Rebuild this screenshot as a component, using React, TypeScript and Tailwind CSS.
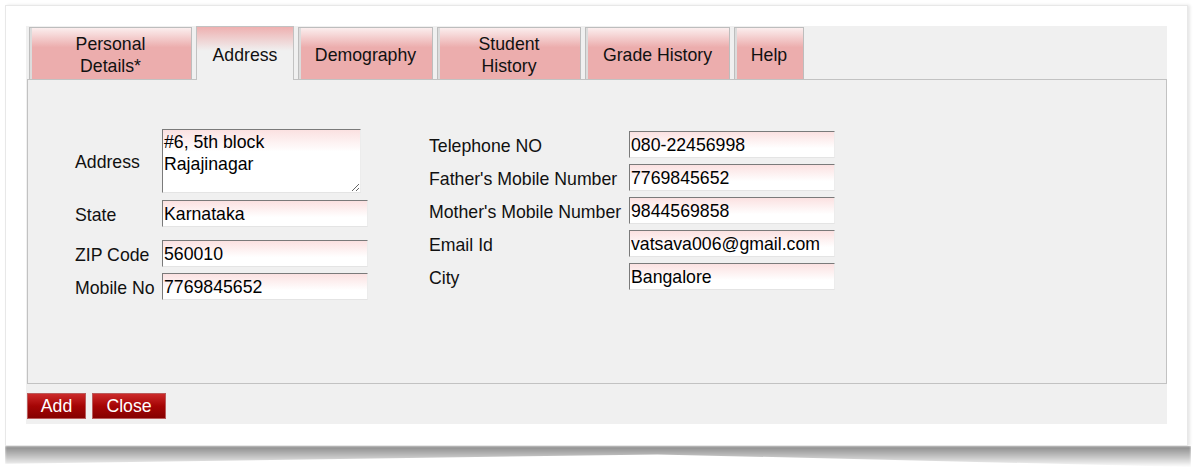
import React from "react";

const font = "font-['Liberation_Sans',Arial,sans-serif]";

const tabs = [
  { label: "Personal\nDetails*", w: "w-[163px]" },
  { label: "Address", w: "w-[98px]", active: true },
  { label: "Demography", w: "w-[135px]" },
  { label: "Student\nHistory", w: "w-[144px]" },
  { label: "Grade History", w: "w-[145px]" },
  { label: "Help", w: "w-[70px]" },
];

const inputCls =
  "h-[27px] w-[206px] border border-t-[#7a7a7a] border-l-[#7a7a7a] border-r-[#ececec] border-b-[#e4e4e4] bg-[linear-gradient(to_bottom,#fbe1e1,#ffffff_65%)] px-[1px] pt-[2px] text-[17.7px] leading-[23px] text-black outline-none";

function Field({ value }: { value: string }) {
  return <input type="text" defaultValue={value} className={inputCls} />;
}

const rightFields = [
  ["Telephone NO", "080-22456998"],
  ["Father's Mobile Number", "7769845652"],
  ["Mother's Mobile Number", "9844569858"],
  ["Email Id", "vatsava006@gmail.com"],
  ["City", "Bangalore"],
];

export default function App() {
  return (
    <div className={`w-[1201px] h-[474px] bg-white pt-[5px] pl-[5px] ${font}`}>
      <div className="w-[1183px]">
        {/* card */}
        <div className="bg-white border border-[#e8e8e8] shadow-[2px_0_3px_rgba(0,0,0,0.10)] px-[20px] pt-[20px] pb-[21px]">
          <div className="w-[1141px] h-[398px] bg-[#f0f0f0]">
            {/* tabs */}
            <div className="flex items-end gap-[4px] h-[53px] pl-[3px]">
              {tabs.map((t) =>
                t.active ? (
                  <div
                    key={t.label}
                    className={`${t.w} relative z-10 -mb-[1px] h-[54px] pt-[2px] flex items-center justify-center border border-b-0 border-[#c2c2c2] bg-[linear-gradient(to_bottom,#eeb0b0,#f0f0f0_45%)] text-[17.7px] leading-[22px] text-[#111] text-center whitespace-pre`}
                  >
                    {t.label}
                  </div>
                ) : (
                  <div
                    key={t.label}
                    className={`${t.w} h-[52px] pt-[2px] flex items-center justify-center border border-b-0 border-[#bdbdbd] shadow-[inset_2px_0_0_#dcdcdc] bg-[linear-gradient(to_bottom,#fbeeee,#ecadad_38%,#ecadad)] text-[17.7px] leading-[22px] text-[#111] text-center whitespace-pre`}
                  >
                    {t.label}
                  </div>
                )
              )}
            </div>

            {/* panel */}
            <div className="ml-[1px] w-[1140px] h-[305px] border border-[#c2c2c2] flex text-[17.7px] leading-[22px] text-[#111]">
              {/* left column */}
              <div className="ml-[47px] mt-[49px] w-[306px] flex flex-col">
                <div className="flex items-center h-[64px]">
                  <span className="w-[87px] pt-[2px]">Address</span>
                  <textarea
                    defaultValue={"#6, 5th block\nRajajinagar"}
                    className="h-[64px] w-[199px] border border-t-[#7a7a7a] border-l-[#7a7a7a] border-r-[#ececec] border-b-[#e4e4e4] bg-[linear-gradient(to_bottom,#fbe1e1,#ffffff_35%)] px-[1px] pt-[1px] text-[17.7px] leading-[22px] text-black outline-none"
                  />
                </div>
                <div className="flex items-center mt-[7px]">
                  <span className="w-[87px] pt-[2px]">State</span>
                  <Field value="Karnataka" />
                </div>
                <div className="flex items-center mt-[13px]">
                  <span className="w-[87px] pt-[2px]">ZIP Code</span>
                  <Field value="560010" />
                </div>
                <div className="flex items-center mt-[6px]">
                  <span className="w-[87px] pt-[2px] whitespace-nowrap">Mobile No</span>
                  <Field value="7769845652" />
                </div>
              </div>

              {/* right column */}
              <div className="ml-[48px] mt-[51px] flex flex-col gap-[6px]">
                {rightFields.map(([l, v]) => (
                  <div key={l} className="flex items-center">
                    <span className="w-[200px] pt-[2px] whitespace-nowrap">{l}</span>
                    <Field value={v} />
                  </div>
                ))}
              </div>
            </div>

            {/* buttons */}
            <div className="flex gap-[6px] mt-[9px] ml-[1px]">
              {["Add", "Close"].map((b) => (
                <button
                  key={b}
                  className={`${b === "Add" ? "w-[59px]" : "w-[74px]"} h-[26px] border border-[#b95b5b] bg-[linear-gradient(to_bottom,#cc2a2a,#a50505_50%,#860000)] text-white text-[17.7px] leading-[24px]`}
                >
                  {b}
                </button>
              ))}
            </div>
          </div>
        </div>

        {/* curled shadow under the card */}
        <div className="h-[21px] w-[1186px] bg-[linear-gradient(to_bottom,#8a8a8a,#bdbdbd_45%,#ffffff)] [clip-path:polygon(0_0,100%_0,100%_100%,55%_40%,0_85%)] blur-[1px]" />
      </div>
    </div>
  );
}
